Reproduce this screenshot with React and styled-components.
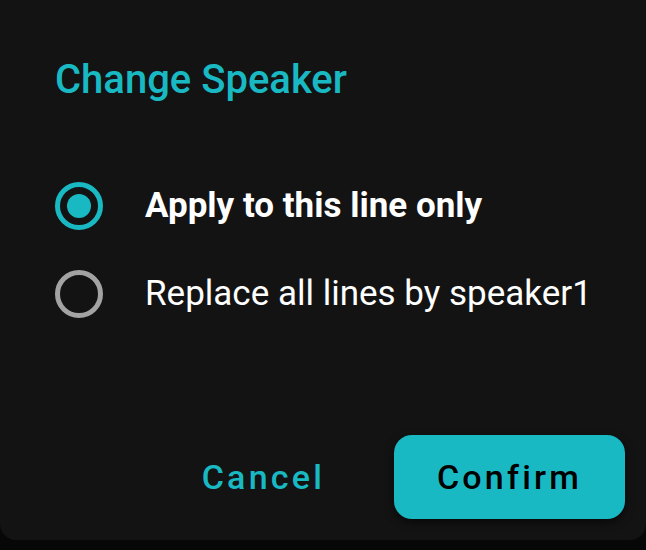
import React, { useState } from "react";
import styled, { createGlobalStyle } from "styled-components";

const Global = createGlobalStyle`
  html, body { margin: 0; padding: 0; background: #070707; }
  body { font-family: Roboto, "Noto Sans", "Liberation Sans", sans-serif; }
  * { box-sizing: border-box; }
`;

const Dialog = styled.div`
  width: 646px;
  height: 540px;
  background: #131313;
  border-radius: 0 0 16px 16px;
  padding: 56px 21px 21px 55px;
  display: flex;
  flex-direction: column;
`;

const Title = styled.h2`
  margin: 0;
  font-size: 40px;
  line-height: 48px;
  font-weight: 500;
  color: #19b9c4;
`;

const Group = styled.div`
  margin-top: 58px;
  display: flex;
  flex-direction: column;
`;

const Row = styled.label`
  height: 88px;
  display: flex;
  align-items: center;
  gap: 42px;
  cursor: pointer;
`;

const Radio = styled.span`
  width: 48px;
  height: 48px;
  flex: none;
  border-radius: 50%;
  border: 5px solid ${(p) => (p.$checked ? "#19b9c4" : "#a3a3a3")};
  display: flex;
  align-items: center;
  justify-content: center;
  &::after {
    content: "";
    width: 24px;
    height: 24px;
    border-radius: 50%;
    background: #19b9c4;
    display: ${(p) => (p.$checked ? "block" : "none")};
  }
`;

const Label = styled.span`
  font-size: 35px;
  line-height: 42px;
  color: #ffffff;
  font-weight: ${(p) => (p.$checked ? 700 : 400)};
`;

const Actions = styled.div`
  margin-top: auto;
  display: flex;
  justify-content: flex-end;
  align-items: center;
  gap: 40px;
`;

const Button = styled.button`
  height: 84px;
  border: none;
  font-family: inherit;
  font-size: 34px;
  font-weight: 500;
  letter-spacing: 3.2px;
  cursor: pointer;
  border-radius: 18px;
  padding: ${(p) => (p.$primary ? "0" : "0 29px")};
  width: ${(p) => (p.$primary ? "231px" : "auto")};
  background: ${(p) => (p.$primary ? "#19b9c4" : "transparent")};
  color: ${(p) => (p.$primary ? "#000000" : "#19b9c4")};
  box-shadow: ${(p) => (p.$primary ? "0 3px 8px rgba(0,0,0,0.6)" : "none")};
`;

const options = ["Apply to this line only", "Replace all lines by speaker1"];

export default function App() {
  const [sel, setSel] = useState(0);
  return (
    <>
      <Global />
      <Dialog>
        <Title>Change Speaker</Title>
        <Group>
          {options.map((o, i) => (
            <Row key={o} onClick={() => setSel(i)}>
              <Radio $checked={sel === i} />
              <Label $checked={sel === i}>{o}</Label>
            </Row>
          ))}
        </Group>
        <Actions>
          <Button>Cancel</Button>
          <Button $primary>Confirm</Button>
        </Actions>
      </Dialog>
    </>
  );
}
